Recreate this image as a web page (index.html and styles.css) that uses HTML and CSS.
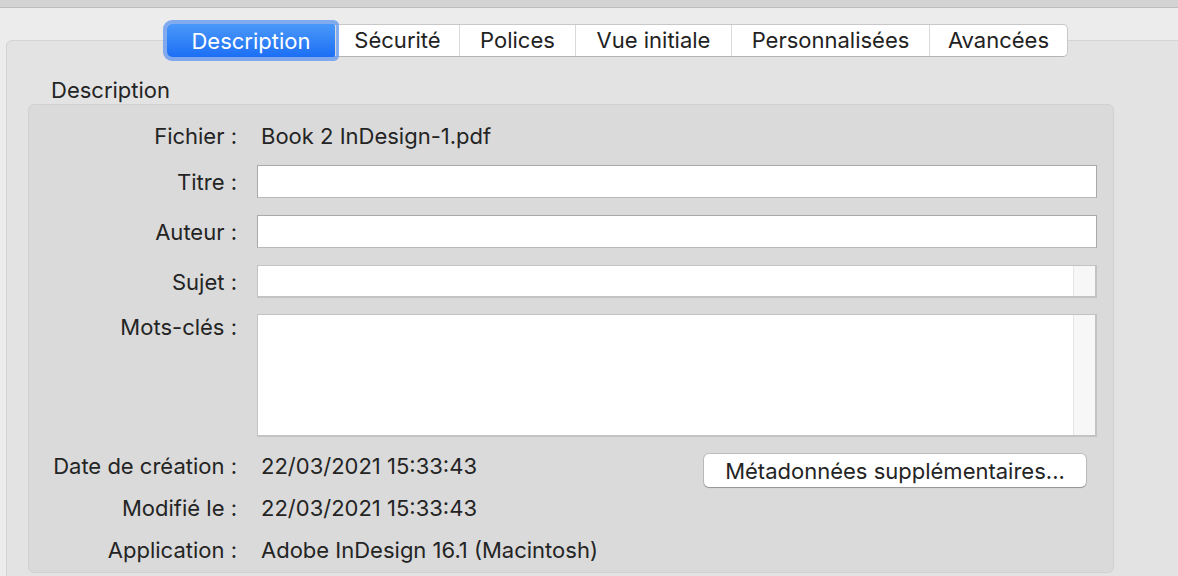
FILE: index.html
```html
<!DOCTYPE html>
<html lang="fr">
<head>
<meta charset="utf-8">
<title>Description</title>
<link rel="stylesheet" href="styles.css">
</head>
<body>
<div class="titlebar"></div>
<div class="window">
  <div class="tabs">
    <div class="tab tab-desc selected">Description</div>
    <div class="tab tab-secu">Sécurité</div>
    <div class="tab tab-pol">Polices</div>
    <div class="tab tab-vue">Vue initiale</div>
    <div class="tab tab-pers">Personnalisées</div>
    <div class="tab tab-av">Avancées</div>
  </div>
  <div class="tabbox">
    <div class="section-label">Description</div>
    <div class="group">
      <div class="row row-file">
        <div class="label">Fichier :</div>
        <div class="value">Book 2 InDesign-1.pdf</div>
      </div>
      <div class="row row-field row-first">
        <div class="label">Titre :</div>
        <div class="field"></div>
      </div>
      <div class="row row-field">
        <div class="label">Auteur :</div>
        <div class="field"></div>
      </div>
      <div class="row row-field">
        <div class="label">Sujet :</div>
        <div class="field field-scroll"><div class="field-body"></div><div class="track"></div></div>
      </div>
      <div class="row row-area">
        <div class="label">Mots-clés :</div>
        <div class="field field-scroll area"><div class="field-body"></div><div class="track"></div></div>
      </div>
      <div class="row row-info row-date">
        <div class="label">Date de création :</div>
        <div class="value">22/03/2021 15:33:43</div>
        <div class="button">Métadonnées supplémentaires...</div>
      </div>
      <div class="row row-info">
        <div class="label">Modifié le :</div>
        <div class="value">22/03/2021 15:33:43</div>
      </div>
      <div class="row row-info">
        <div class="label">Application :</div>
        <div class="value">Adobe InDesign 16.1 (Macintosh)</div>
      </div>
    </div>
  </div>
</div>
</body>
</html>
```
FILE: styles.css
```css
html, body {
  margin: 0;
  padding: 0;
  background: #ececec;
  overflow: hidden;
  height: 576px;
}
body {
  font-family: "Inter", "Noto Sans", sans-serif;
  font-size: 22px;
  color: #242424;
}
.titlebar {
  height: 7px;
  background: #d3d3d3;
  border-bottom: 1px solid #bdbdbd;
}
.window {
  padding-top: 16px;
}
.tabs {
  position: relative;
  z-index: 1;
  display: flex;
  margin-left: 167px;
  width: 899px;
  height: 31px;
  background: #ffffff;
  border: 1px solid #c8c8c8;
  border-bottom-color: #b4b4b4;
  border-radius: 5px;
}
.tab {
  display: flex;
  align-items: center;
  justify-content: center;
  border-left: 1px solid #d9d9d9;
  color: #222222;
  white-space: nowrap;
  line-height: 31px;
}
.tab-desc { width: 168px; border-left: none; }
.tab-secu { width: 123px; }
.tab-pol { width: 115px; }
.tab-vue { width: 155px; }
.tab-pers { width: 197px; }
.tab-av { flex: 1; }
.tab.selected {
  margin: -1px 0 -1px -1px;
  height: 33px;
  padding-top: 1px;
  box-sizing: border-box;
  color: #ffffff;
  background: linear-gradient(#4a98f9, #1c6ff5);
  border-radius: 5px 2px 2px 5px;
  box-shadow: 0 0 0 4px rgba(105, 156, 238, 0.82);
}
.tabbox {
  margin: -17px -20px 0 6px;
  height: 560px;
  background: #e3e3e3;
  border: 1px solid #d4d4d4;
  border-radius: 6px;
}
.section-label {
  padding: 37px 0 0 44px;
  height: 25px;
  line-height: 25px;
}
.group {
  margin: 1px 0 0 21px;
  width: 1086px;
  box-sizing: border-box;
  background: #dadada;
  border: 1px solid #d1d1d1;
  border-radius: 6px;
  padding: 14px 0 1px 0;
}
.row {
  display: flex;
  align-items: center;
  height: 33px;
}
.label {
  width: 208px;
  flex: none;
  text-align: right;
  white-space: nowrap;
  margin-right: 20px;
}
.value {
  padding-left: 4px;
  white-space: nowrap;
}
.row-first { margin-top: 13px; }
.row-field + .row-field { margin-top: 17px; }
.field {
  width: 840px;
  height: 33px;
  box-sizing: border-box;
  background: #ffffff;
  border: 1px solid #a9a9a9;
  border-bottom-color: #b9b9b9;
}
.field-scroll {
  display: flex;
  border: 1px solid #c3c3c3;
  border-right-width: 2px;
  border-bottom-width: 2px;
}
.field-body { flex: 1; }
.track {
  width: 21px;
  background: #f7f7f7;
  border-left: 1px solid #e6e6e6;
}
.row-area {
  margin-top: 16px;
  height: 123px;
  align-items: flex-start;
}
.row-area .label {
  line-height: 25px;
  padding-top: 1px;
}
.area { height: 123px; }
.row-info { height: 42px; }
.row-date {
  margin-top: 8px;
}
.button {
  margin-left: auto;
  margin-right: 27px;
  align-self: flex-end;
  width: 382px;
  height: 33px;
  box-sizing: border-box;
  display: flex;
  align-items: center;
  justify-content: center;
  background: #ffffff;
  border-radius: 5px;
  box-shadow: 0 0 0 1px rgba(0, 0, 0, 0.13), 0 1px 1px rgba(0, 0, 0, 0.22);
  white-space: nowrap;
}
```
